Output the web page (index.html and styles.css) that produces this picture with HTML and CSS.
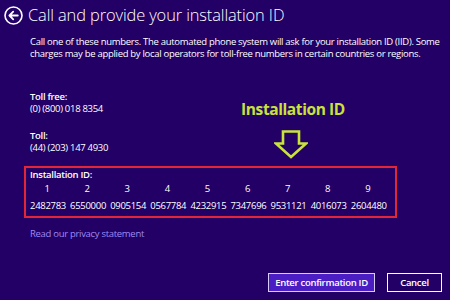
FILE: index.html
```html
<!DOCTYPE html>
<html lang="en">
<head>
<meta charset="utf-8">
<title>Call and provide your installation ID</title>
<link rel="stylesheet" href="styles.css">
</head>
<body>
<div class="page">
  <header class="header">
    <svg class="back" width="19" height="19" viewBox="0 0 19 19" aria-hidden="true">
      <circle cx="9.5" cy="9.5" r="8.5" fill="none" stroke="#fff" stroke-width="1.6"/>
      <path d="M13.8 9.5H5.6M9.2 5.7L5.4 9.5l3.8 3.8" fill="none" stroke="#fff" stroke-width="1.8" stroke-linecap="round" stroke-linejoin="round"/>
    </svg>
    <h1 class="title">Call and provide your installation ID</h1>
  </header>

  <p class="intro">Call one of these numbers. The automated phone system will ask for your installation ID (IID). Some<br>charges may be applied by local operators for toll-free numbers in certain countries or regions.</p>

  <section class="phones">
    <div class="phone">
      <div class="phone-label">Toll free:</div>
      <div class="phone-number">(0) (800) 018 8354</div>
    </div>
    <div class="phone phone-toll">
      <div class="phone-label">Toll:</div>
      <div class="phone-number">(44) (203) 147 4930</div>
    </div>

    <div class="callout">
      <div class="callout-text">Installation ID</div>
      <svg class="callout-arrow" width="34" height="29" viewBox="0 0 34 29" aria-hidden="true">
        <path d="M9 1.5H25V13.5H32L17 27L2 13.5H9Z" fill="none" stroke="#c9e33a" stroke-width="2.6" stroke-linejoin="miter"/>
      </svg>
    </div>
  </section>

  <section class="iid-box">
    <div class="iid-label">Installation ID:</div>
    <div class="iid-grid">
      <span class="col">1</span><span class="col">2</span><span class="col">3</span><span class="col">4</span><span class="col">5</span><span class="col">6</span><span class="col">7</span><span class="col">8</span><span class="col">9</span>
      <span class="val">2482783</span><span class="val">6550000</span><span class="val">0905154</span><span class="val">0567784</span><span class="val">4232915</span><span class="val">7347696</span><span class="val">9531121</span><span class="val">4016073</span><span class="val">2604480</span>
    </div>
  </section>

  <a class="privacy" href="#">Read our privacy statement</a>

  <footer class="actions">
    <button class="btn btn-primary" type="button">Enter confirmation ID</button>
    <button class="btn btn-cancel" type="button">Cancel</button>
  </footer>
</div>
</body>
</html>
```

FILE: styles.css
```css
html, body {
  margin: 0;
  padding: 0;
}

body {
  width: 450px;
  height: 300px;
  overflow: hidden;
  background: #220066;
  color: #ffffff;
  font-family: "Open Sans", "Noto Sans", sans-serif;
}

.page {
  display: flex;
  flex-direction: column;
  height: 300px;
}

.header {
  display: flex;
  align-items: center;
  gap: 5px;
  padding: 5px 0 0 4px;
  height: 21px;
}

.back {
  flex: none;
}

.title {
  margin: 0;
  font-size: 16.4px;
  font-weight: 300;
  letter-spacing: -0.1px;
  line-height: 19px;
  position: relative;
  top: -1px;
}

.intro {
  margin: 10px 0 0 30px;
  font-size: 9.5px;
  line-height: 12px;
  letter-spacing: -0.3px;
  white-space: nowrap;
}

.phones {
  position: relative;
  margin: 31px 0 0 30px;
  font-size: 9.5px;
  line-height: 12px;
  letter-spacing: -0.3px;
}

.phone-label {
  font-weight: 600;
}

.phone-toll {
  margin-top: 15px;
}

.callout {
  position: absolute;
  left: 207px;
  top: 8px;
  display: flex;
  flex-direction: column;
  align-items: center;
  width: 112px;
}

.callout-text {
  color: #c9e33a;
  font-size: 15.5px;
  font-weight: 700;
  line-height: 20px;
  letter-spacing: -0.4px;
  white-space: nowrap;
}

.callout-arrow {
  margin-top: 11px;
  margin-left: -5px;
}

.iid-box {
  margin: 12px 0 0 24px;
  width: 365px;
  height: 47px;
  border: 2px solid #e3253a;
  padding: 1px 0 0 4px;
  font-size: 9.5px;
  letter-spacing: -0.3px;
}

.iid-label {
  font-weight: 600;
  line-height: 12px;
}

.iid-grid {
  display: grid;
  grid-template-columns: repeat(9, 34px);
  column-gap: 6.1px;
  line-height: 16.5px;
}

.col,
.val {
  text-align: center;
  white-space: nowrap;
}

.privacy {
  align-self: flex-start;
  margin: 10px 0 0 30px;
  color: #9d8af2;
  font-size: 9.5px;
  line-height: 12px;
  letter-spacing: -0.3px;
  text-decoration: none;
}

.actions {
  display: flex;
  justify-content: flex-end;
  gap: 12px;
  margin: 33px 8px 0 0;
}

.btn {
  box-sizing: border-box;
  height: 19px;
  padding: 0;
  border: 1.5px solid #ffffff;
  background: #220066;
  color: #ffffff;
  font-family: inherit;
  font-size: 9.5px;
  font-weight: 600;
  letter-spacing: -0.3px;
  line-height: 14px;
  white-space: nowrap;
  text-align: center;
}

.btn-primary {
  width: 107px;
  background: #4a1ec2;
  border-color: #d6ccf5;
}

.btn-cancel {
  width: 55px;
}
```
